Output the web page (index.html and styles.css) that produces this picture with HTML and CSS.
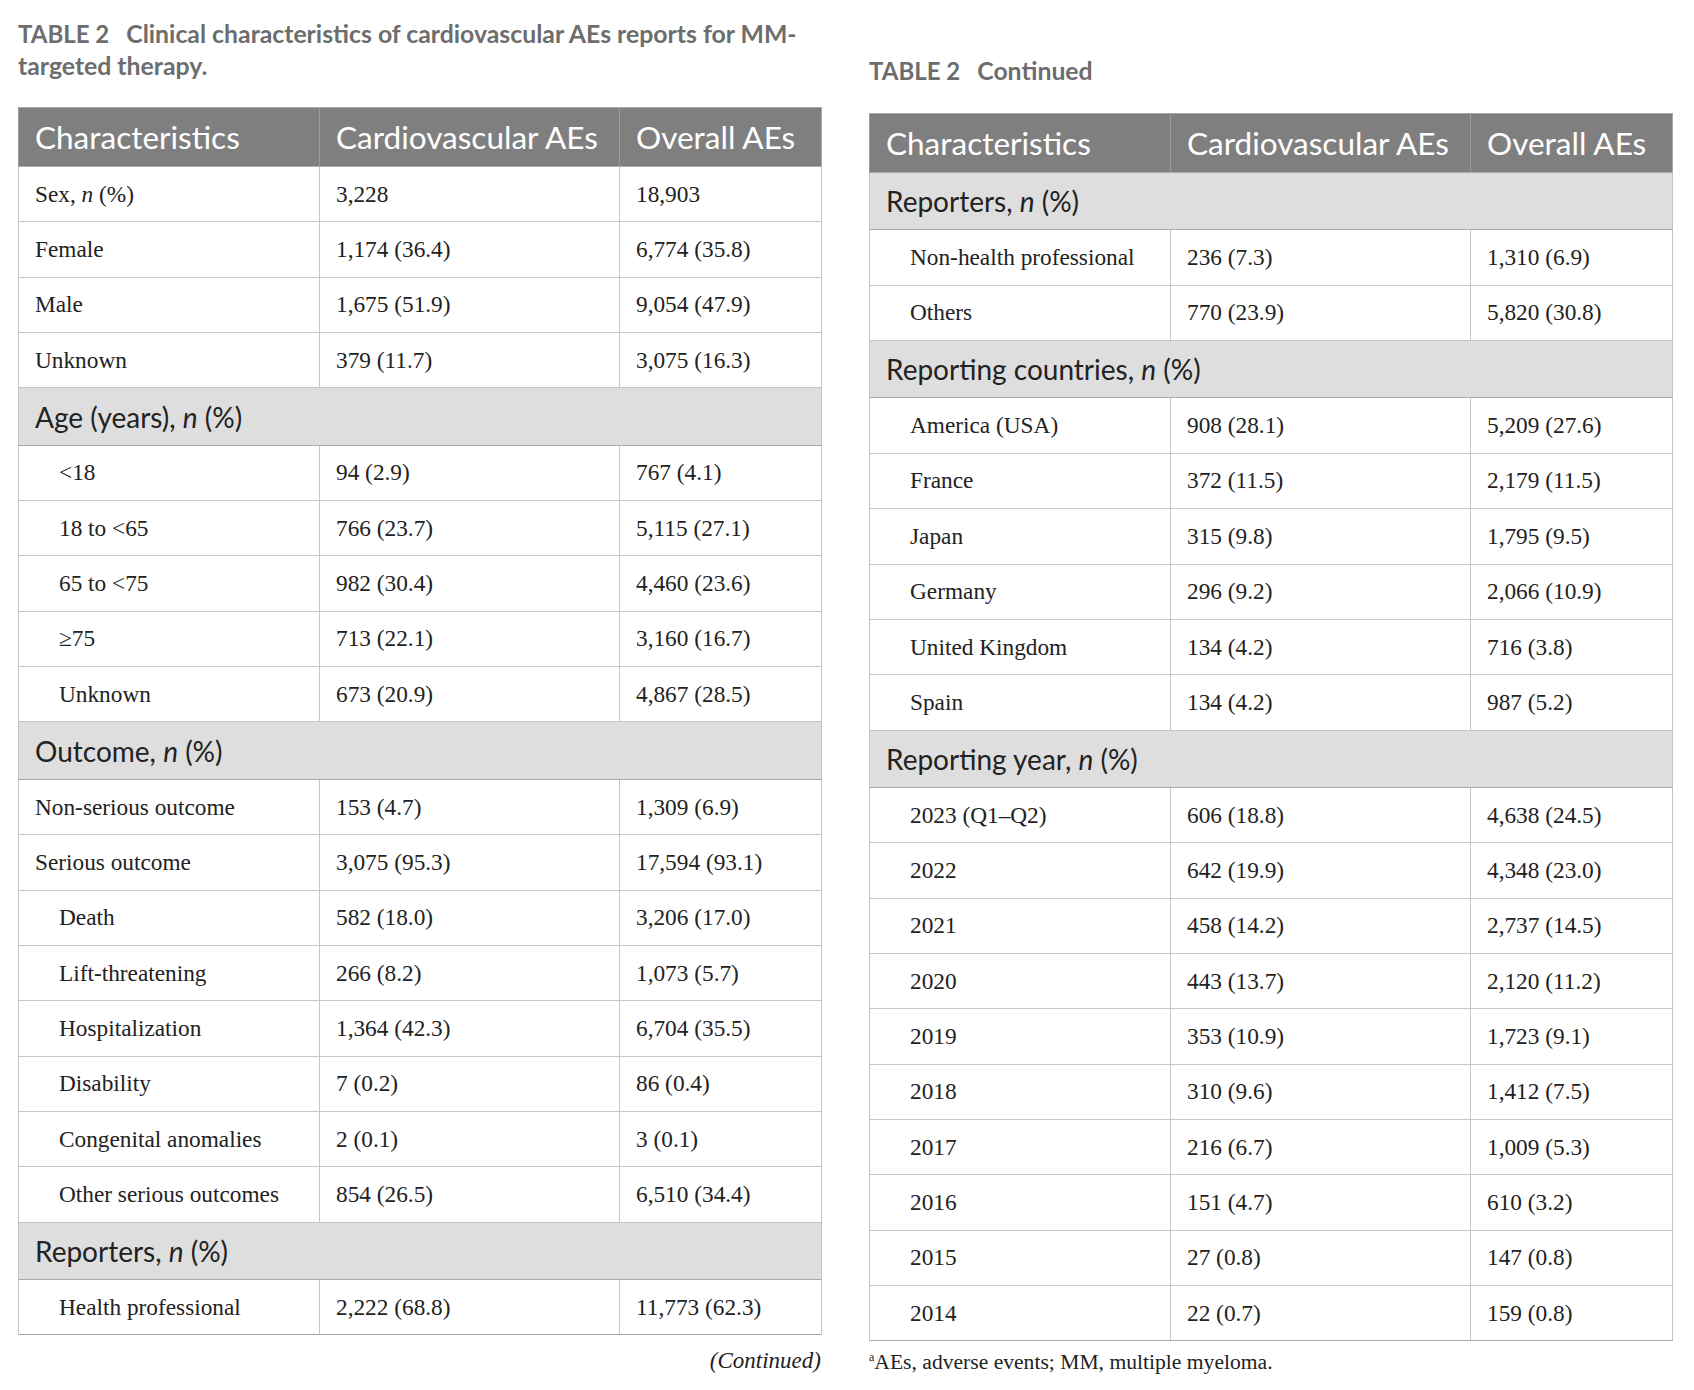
FILE: index.html
```html
<!DOCTYPE html>
<html lang="en">
<head>
<meta charset="utf-8">
<title>TABLE 2</title>
<link rel="stylesheet" href="styles.css">
</head>
<body>
<main class="page">
  <section class="panel panel-left">
    <h2 class="caption caption-main"><span class="label">TABLE 2</span> <span class="title">Clinical characteristics of cardiovascular AEs reports for MM-targeted therapy.</span></h2>
    <table class="tbl">
      <colgroup><col class="c1"><col class="c2"><col class="c3"></colgroup>
      <thead>
        <tr><th>Characteristics</th><th>Cardiovascular AEs</th><th>Overall AEs</th></tr>
      </thead>
      <tbody>
        <tr><td>Sex, <i>n</i> (%)</td><td>3,228</td><td>18,903</td></tr>
        <tr><td>Female</td><td>1,174 (36.4)</td><td>6,774 (35.8)</td></tr>
        <tr><td>Male</td><td>1,675 (51.9)</td><td>9,054 (47.9)</td></tr>
        <tr><td>Unknown</td><td>379 (11.7)</td><td>3,075 (16.3)</td></tr>
        <tr class="sec"><td colspan="3">Age (years), <i>n</i> (%)</td></tr>
        <tr class="ind"><td>&lt;18</td><td>94 (2.9)</td><td>767 (4.1)</td></tr>
        <tr class="ind"><td>18 to &lt;65</td><td>766 (23.7)</td><td>5,115 (27.1)</td></tr>
        <tr class="ind"><td>65 to &lt;75</td><td>982 (30.4)</td><td>4,460 (23.6)</td></tr>
        <tr class="ind"><td>≥75</td><td>713 (22.1)</td><td>3,160 (16.7)</td></tr>
        <tr class="ind"><td>Unknown</td><td>673 (20.9)</td><td>4,867 (28.5)</td></tr>
        <tr class="sec"><td colspan="3">Outcome, <i>n</i> (%)</td></tr>
        <tr><td>Non-serious outcome</td><td>153 (4.7)</td><td>1,309 (6.9)</td></tr>
        <tr><td>Serious outcome</td><td>3,075 (95.3)</td><td>17,594 (93.1)</td></tr>
        <tr class="ind"><td>Death</td><td>582 (18.0)</td><td>3,206 (17.0)</td></tr>
        <tr class="ind"><td>Lift-threatening</td><td>266 (8.2)</td><td>1,073 (5.7)</td></tr>
        <tr class="ind"><td>Hospitalization</td><td>1,364 (42.3)</td><td>6,704 (35.5)</td></tr>
        <tr class="ind"><td>Disability</td><td>7 (0.2)</td><td>86 (0.4)</td></tr>
        <tr class="ind"><td>Congenital anomalies</td><td>2 (0.1)</td><td>3 (0.1)</td></tr>
        <tr class="ind"><td>Other serious outcomes</td><td>854 (26.5)</td><td>6,510 (34.4)</td></tr>
        <tr class="sec"><td colspan="3">Reporters, <i>n</i> (%)</td></tr>
        <tr class="ind"><td>Health professional</td><td>2,222 (68.8)</td><td>11,773 (62.3)</td></tr>
      </tbody>
    </table>
    <p class="continued">(Continued)</p>
  </section>

  <section class="panel panel-right">
    <h2 class="caption caption-cont"><span class="label">TABLE 2</span> <span class="title">Continued</span></h2>
    <table class="tbl">
      <colgroup><col class="c1"><col class="c2"><col class="c3"></colgroup>
      <thead>
        <tr><th>Characteristics</th><th>Cardiovascular AEs</th><th>Overall AEs</th></tr>
      </thead>
      <tbody>
        <tr class="sec"><td colspan="3">Reporters, <i>n</i> (%)</td></tr>
        <tr class="ind"><td>Non-health professional</td><td>236 (7.3)</td><td>1,310 (6.9)</td></tr>
        <tr class="ind"><td>Others</td><td>770 (23.9)</td><td>5,820 (30.8)</td></tr>
        <tr class="sec"><td colspan="3">Reporting countries, <i>n</i> (%)</td></tr>
        <tr class="ind"><td>America (USA)</td><td>908 (28.1)</td><td>5,209 (27.6)</td></tr>
        <tr class="ind"><td>France</td><td>372 (11.5)</td><td>2,179 (11.5)</td></tr>
        <tr class="ind"><td>Japan</td><td>315 (9.8)</td><td>1,795 (9.5)</td></tr>
        <tr class="ind"><td>Germany</td><td>296 (9.2)</td><td>2,066 (10.9)</td></tr>
        <tr class="ind"><td>United Kingdom</td><td>134 (4.2)</td><td>716 (3.8)</td></tr>
        <tr class="ind"><td>Spain</td><td>134 (4.2)</td><td>987 (5.2)</td></tr>
        <tr class="sec"><td colspan="3">Reporting year, <i>n</i> (%)</td></tr>
        <tr class="ind"><td>2023 (Q1–Q2)</td><td>606 (18.8)</td><td>4,638 (24.5)</td></tr>
        <tr class="ind"><td>2022</td><td>642 (19.9)</td><td>4,348 (23.0)</td></tr>
        <tr class="ind"><td>2021</td><td>458 (14.2)</td><td>2,737 (14.5)</td></tr>
        <tr class="ind"><td>2020</td><td>443 (13.7)</td><td>2,120 (11.2)</td></tr>
        <tr class="ind"><td>2019</td><td>353 (10.9)</td><td>1,723 (9.1)</td></tr>
        <tr class="ind"><td>2018</td><td>310 (9.6)</td><td>1,412 (7.5)</td></tr>
        <tr class="ind"><td>2017</td><td>216 (6.7)</td><td>1,009 (5.3)</td></tr>
        <tr class="ind"><td>2016</td><td>151 (4.7)</td><td>610 (3.2)</td></tr>
        <tr class="ind"><td>2015</td><td>27 (0.8)</td><td>147 (0.8)</td></tr>
        <tr class="ind"><td>2014</td><td>22 (0.7)</td><td>159 (0.8)</td></tr>
      </tbody>
    </table>
    <p class="footnote"><sup>a</sup>AEs, adverse events; MM, multiple myeloma.</p>
  </section>
</main>
</body>
</html>
```

FILE: styles.css
```css
html, body {
  margin: 0;
  padding: 0;
  background: #ffffff;
}

.page {
  display: flex;
  align-items: flex-start;
  gap: 48px;
  padding-left: 18px;
  font-family: "Liberation Serif", "Times New Roman", serif;
  color: #222222;
}

.panel {
  width: 803px;
  display: flex;
  flex-direction: column;
}

.caption {
  margin: 0;
  font-family: Lato, "Open Sans", sans-serif;
  font-weight: 700;
  font-size: 24.8px;
  line-height: 32px;
  color: #6d6d6d;
}

.caption .label {
  font-size: 24px;
  margin-right: 11px;
}

.caption-main {
  margin-top: 18px;
  margin-bottom: 25px;
  width: 803px;
}

.caption-cont {
  margin-top: 55px;
  margin-bottom: 26px;
}

.tbl {
  width: 803px;
  table-layout: fixed;
  border-collapse: collapse;
  border: 1px solid #a9a9a9;
}

.tbl col.c1 { width: 301px; }
.tbl col.c2 { width: 300px; }
.tbl col.c3 { width: 202px; }

.tbl th {
  height: 58px;
  padding: 0 16px;
  background: #7f7f7f;
  color: #ffffff;
  font-family: Lato, "Open Sans", sans-serif;
  font-weight: 400;
  font-size: 31.5px;
  text-align: left;
  white-space: nowrap;
  border-left: 1px solid #9c9c9c;
  border-bottom: 1px solid #a9a9a9;
}

.tbl td {
  height: 54.35px;
  padding: 0 16px;
  font-size: 23.3px;
  border: 1px solid #c6c6c6;
  white-space: nowrap;
  vertical-align: middle;
}

.tbl tr.ind td:first-child {
  padding-left: 40px;
}

.panel-right .tbl tbody tr:not(.sec) td:first-child {
  padding-left: 40px;
}

.tbl tr.sec td {
  height: 56.4px;
  background: #dedede;
  font-family: Lato, "Open Sans", sans-serif;
  font-size: 28px;
  color: #222222;
  border-top: 1px solid #aaaaaa;
  border-bottom: 1px solid #aaaaaa;
}

.tbl tbody tr:last-child td {
  border-bottom: 1px solid #a9a9a9;
}

.continued {
  margin: 12px 0 0;
  text-align: right;
  font-style: italic;
  font-size: 23px;
  line-height: 28px;
  color: #222222;
}

.footnote {
  margin: 7px 0 0;
  font-size: 21.6px;
  line-height: 28px;
  color: #222222;
}

.footnote sup {
  font-size: 12px;
  vertical-align: 8px;
  line-height: 0;
}
```
